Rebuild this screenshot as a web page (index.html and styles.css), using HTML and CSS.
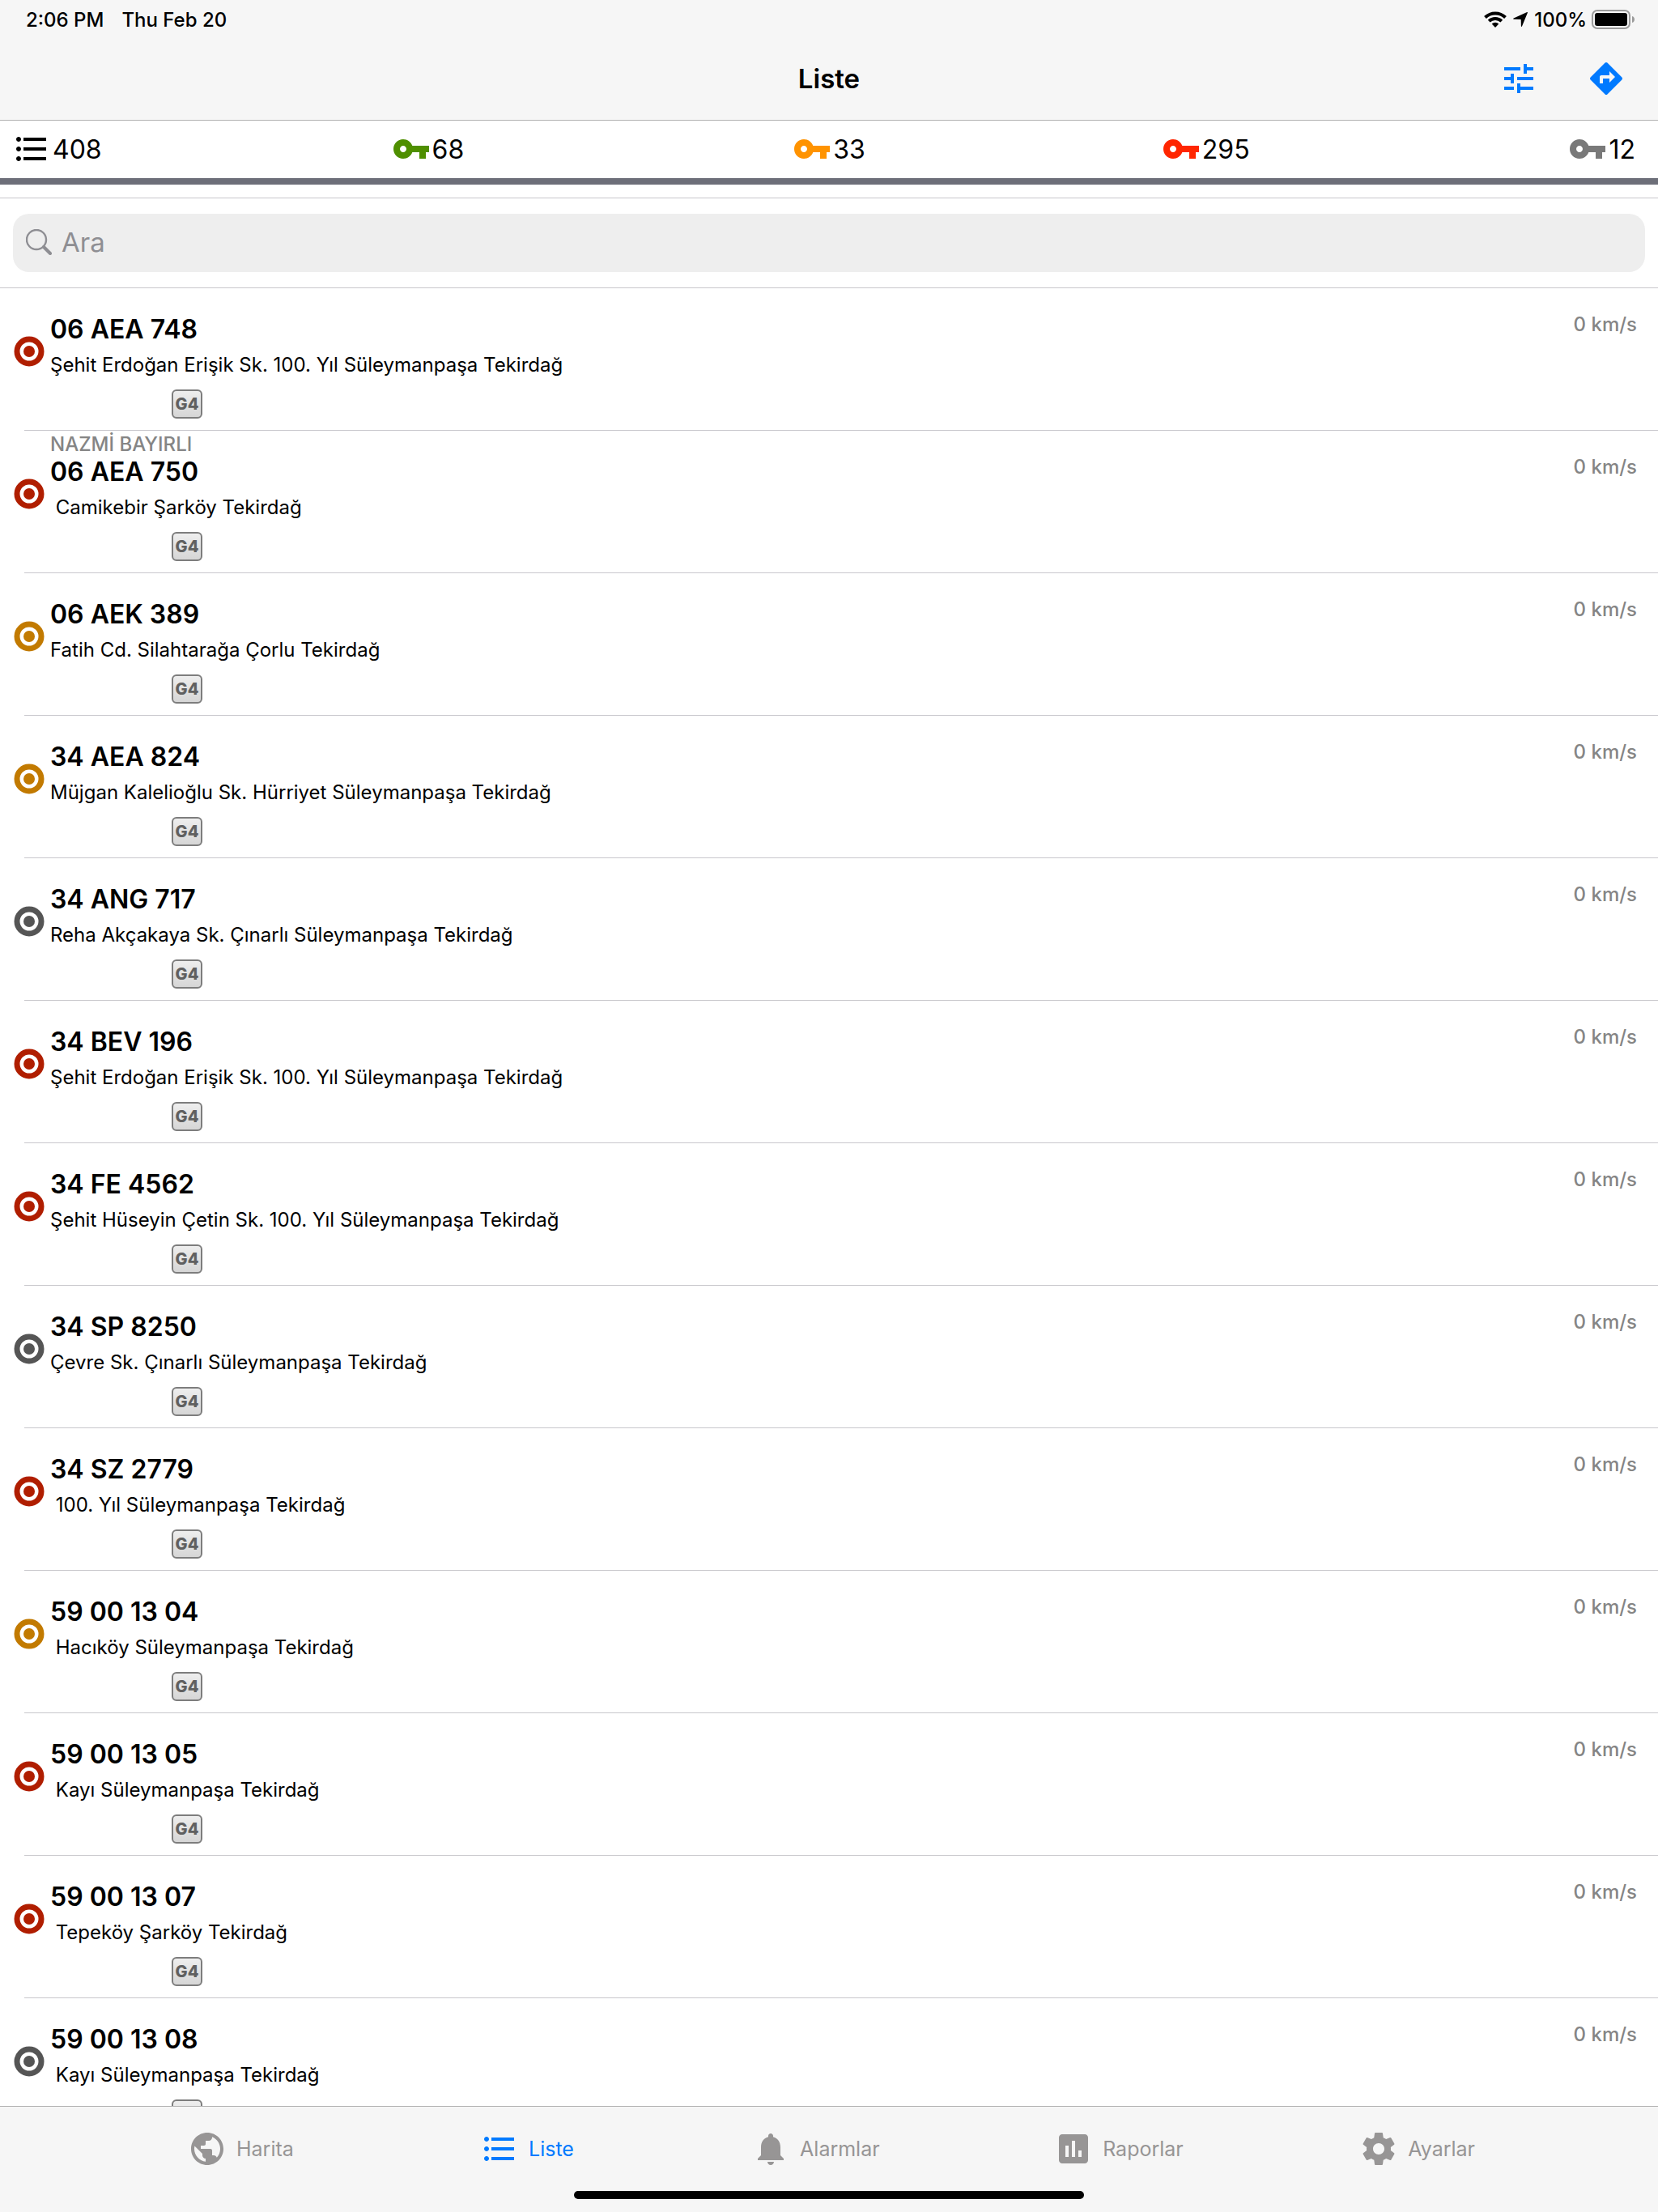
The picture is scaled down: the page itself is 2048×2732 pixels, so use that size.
FILE: index.html
```
<!DOCTYPE html>
<html lang="tr">
<head>
  <meta charset="UTF-8">
  <meta name="viewport" content="width=device-width, initial-scale=1.0">
  <title>Liste</title>
  <link rel="stylesheet" href="styles.css">
</head>
<body>
  <!-- shared icons -->
  <svg class="sprite" aria-hidden="true">
    <symbol id="icon-list" viewBox="0 0 24 24">
      <path d="M4 10.5c-.83 0-1.5.67-1.5 1.5s.67 1.5 1.5 1.5 1.5-.67 1.5-1.5-.67-1.5-1.5-1.5zm0-6c-.83 0-1.5.67-1.5 1.5S3.17 7.5 4 7.5 5.5 6.83 5.5 6 4.83 4.5 4 4.5zm0 12c-.83 0-1.5.68-1.5 1.5s.68 1.5 1.5 1.5 1.5-.68 1.5-1.5-.67-1.5-1.5-1.5zM7 19h14v-2H7v2zm0-6h14v-2H7v2zm0-8v2h14V5H7z"/>
    </symbol>
    <symbol id="icon-key" viewBox="0 0 24 24">
      <path d="M12.65 10C11.83 7.67 9.61 6 7 6c-3.31 0-6 2.69-6 6s2.69 6 6 6c2.61 0 4.83-1.67 5.65-4H17v4h4v-4h2v-4H12.65zM7 14c-1.1 0-2-.9-2-2s.9-2 2-2 2 .9 2 2-.9 2-2 2z"/>
    </symbol>
    <symbol id="icon-target" viewBox="0 0 38 38">
      <circle cx="19" cy="19" r="15" fill="#fff" stroke="currentColor" stroke-width="7"/>
      <circle cx="19" cy="19" r="7"/>
    </symbol>
  </svg>

  <header class="header">
    <div class="status-bar">
      <span>2:06 PM</span>
      <span>Thu Feb 20</span>
      <div class="status-right">
        <svg class="wifi" viewBox="0 0 28 20" aria-hidden="true">
          <path d="M1.5 7.5a18 18 0 0 1 25 0M6.2 12.1a11.4 11.4 0 0 1 15.6 0" fill="none" stroke="#000" stroke-width="4"/>
          <path d="M14 20l-4.3-4.4a6.2 6.2 0 0 1 8.6 0z"/>
        </svg>
        <svg class="location" viewBox="0 0 18 18" aria-hidden="true">
          <path d="M17.9.7L11 17.4c-.3.7-1.1.6-1.1-.1L9.700 9.100.8 8.700c-.8 0-.8-.8-.1-1.100L17.200.1c.5-.2.9.2.7.6z"/>
        </svg>
        <span>100%</span>
        <svg class="battery" viewBox="0 0 54 24" aria-hidden="true">
          <rect x="1" y="1" width="46" height="22" rx="6" fill="none" stroke="#9b9b9b" stroke-width="2"/>
          <rect x="4" y="4" width="40" height="16" rx="3"/>
          <path d="M50 8c4 1 4 7 0 8z" fill="#9b9b9b"/>
        </svg>
      </div>
    </div>
    <div class="nav-bar">
      <h1>Liste</h1>
      <div class="nav-actions">
        <button type="button" class="icon-btn" aria-label="Filtre">
          <svg class="icon" viewBox="0 0 24 24"><path d="M3 17v2h6v-2H3zM3 5v2h10V5H3zm10 16v-2h8v-2h-8v-2h-2v6h2zM7 9v2H3v2h4v2h2V9H7zm14 4v-2H11v2h10zm-6-4h2V7h4V5h-4V3h-2v6z"/></svg>
        </button>
        <button type="button" class="icon-btn" aria-label="Yol tarifi">
          <svg class="icon" viewBox="0 0 24 24"><path d="M21.71 11.29l-9-9c-.39-.39-1.02-.39-1.41 0l-9 9c-.39.39-.39 1.02 0 1.41l9 9c.39.39 1.02.39 1.41 0l9-9c.39-.38.39-1.01 0-1.41zM14 14.5V12h-4v3H8v-4c0-.55.45-1 1-1h5V7.5l3.5 3.5-3.5 3.5z"/></svg>
        </button>
      </div>
    </div>
  </header>

  <div class="counters">
    <div class="counter"><svg class="icon"><use href="#icon-list"/></svg>408</div>
    <div class="counter"><svg class="icon green"><use href="#icon-key"/></svg>68</div>
    <div class="counter"><svg class="icon orange"><use href="#icon-key"/></svg>33</div>
    <div class="counter"><svg class="icon red"><use href="#icon-key"/></svg>295</div>
    <div class="counter"><svg class="icon gray"><use href="#icon-key"/></svg>12</div>
  </div>

  <div class="search">
    <label class="search-box" for="search">
      <svg class="search-icon" viewBox="0 0 32 32" aria-hidden="true">
        <circle cx="13" cy="13" r="12" fill="none" stroke="#8e8e93" stroke-width="2.4"/>
        <path d="M22 22l8 8" stroke="#8e8e93" stroke-width="4" stroke-linecap="round"/>
      </svg>
      <input type="search" id="search" placeholder="Ara" aria-label="Ara">
    </label>
  </div>

  <ul class="vehicles" id="vehicles"></ul>

  <footer class="footer">
    <nav class="tabs">
      <a class="tab" href="#harita">
        <svg class="icon" viewBox="0 0 24 24"><path d="M12 2C6.48 2 2 6.48 2 12s4.48 10 10 10 10-4.48 10-10S17.52 2 12 2zm-1 17.93c-3.95-.49-7-3.85-7-7.93 0-.62.08-1.21.21-1.79L9 15v1c0 1.1.9 2 2 2v1.93zm6.9-2.54c-.26-.81-1-1.39-1.9-1.39h-1v-3c0-.55-.45-1-1-1H8v-2h2c.55 0 1-.45 1-1V7h2c1.1 0 2-.9 2-2v-.41c2.93 1.19 5 4.06 5 7.41 0 2.08-.8 3.97-2.1 5.39z"/></svg>
        Harita
      </a>
      <a class="tab active" href="#liste">
        <svg class="icon"><use href="#icon-list"/></svg>
        Liste
      </a>
      <a class="tab" href="#alarmlar">
        <svg class="icon" viewBox="0 0 24 24"><path d="M12 22c1.1 0 2-.9 2-2h-4c0 1.1.89 2 2 2zm6-6v-5c0-3.07-1.64-5.64-4.5-6.32V4c0-.83-.67-1.5-1.5-1.5s-1.5.67-1.5 1.5v.68C7.63 5.36 6 7.92 6 11v5l-2 2v1h16v-1l-2-2z"/></svg>
        Alarmlar
      </a>
      <a class="tab" href="#raporlar">
        <svg class="icon" viewBox="0 0 24 24"><path d="M19 3H5c-1.1 0-2 .9-2 2v14c0 1.1.9 2 2 2h14c1.1 0 2-.9 2-2V5c0-1.1-.9-2-2-2zM9 17H7v-7h2v7zm4 0h-2V7h2v10zm4 0h-2v-4h2v4z"/></svg>
        Raporlar
      </a>
      <a class="tab" href="#ayarlar">
        <svg class="icon" viewBox="0 0 24 24"><path d="M19.43 12.98c.04-.32.07-.64.07-.98s-.03-.66-.07-.98l2.11-1.65c.19-.15.24-.42.12-.64l-2-3.46c-.12-.22-.39-.3-.61-.22l-2.49 1c-.52-.4-1.08-.73-1.69-.98l-.38-2.65C14.46 2.18 14.25 2 14 2h-4c-.25 0-.46.18-.49.42l-.38 2.65c-.61.25-1.17.59-1.69.98l-2.49-1c-.23-.09-.49 0-.61.22l-2 3.46c-.13.22-.07.49.12.64l2.11 1.65c-.04.32-.07.65-.07.98s.03.66.07.98l-2.11 1.65c-.19.15-.24.42-.12.64l2 3.46c.12.22.39.3.61.22l2.49-1c.52.4 1.08.73 1.69.98l.38 2.65c.03.24.24.42.49.42h4c.25 0 .46-.18.49-.42l.38-2.65c.61-.25 1.17-.59 1.69-.98l2.49 1c.23.09.49 0 .61-.22l2-3.46c.12-.22.07-.49-.12-.64l-2.11-1.65zM12 15.5c-1.93 0-3.5-1.57-3.5-3.5s1.57-3.5 3.5-3.5 3.5 1.57 3.5 3.5-1.57 3.5-3.5 3.5z"/></svg>
        Ayarlar
      </a>
    </nav>
    <div class="home-indicator"></div>
  </footer>

  <script>
    // some addresses come without a street and keep their leading space
    const vehicles = [
      { plate: '06 AEA 748', status: 'stopped', address: 'Şehit Erdoğan Erişik Sk. 100. Yıl Süleymanpaşa Tekirdağ' },
      { plate: '06 AEA 750', status: 'stopped', address: ' Camikebir Şarköy Tekirdağ', driver: 'NAZMİ BAYIRLI' },
      { plate: '06 AEK 389', status: 'idle', address: 'Fatih Cd. Silahtarağa Çorlu Tekirdağ' },
      { plate: '34 AEA 824', status: 'idle', address: 'Müjgan Kalelioğlu Sk. Hürriyet Süleymanpaşa Tekirdağ' },
      { plate: '34 ANG 717', status: 'offline', address: 'Reha Akçakaya Sk. Çınarlı Süleymanpaşa Tekirdağ' },
      { plate: '34 BEV 196', status: 'stopped', address: 'Şehit Erdoğan Erişik Sk. 100. Yıl Süleymanpaşa Tekirdağ' },
      { plate: '34 FE 4562', status: 'stopped', address: 'Şehit Hüseyin Çetin Sk. 100. Yıl Süleymanpaşa Tekirdağ' },
      { plate: '34 SP 8250', status: 'offline', address: 'Çevre Sk. Çınarlı Süleymanpaşa Tekirdağ' },
      { plate: '34 SZ 2779', status: 'stopped', address: ' 100. Yıl Süleymanpaşa Tekirdağ' },
      { plate: '59 00 13 04', status: 'idle', address: ' Hacıköy Süleymanpaşa Tekirdağ' },
      { plate: '59 00 13 05', status: 'stopped', address: ' Kayı Süleymanpaşa Tekirdağ' },
      { plate: '59 00 13 07', status: 'stopped', address: ' Tepeköy Şarköy Tekirdağ' },
      { plate: '59 00 13 08', status: 'offline', address: ' Kayı Süleymanpaşa Tekirdağ' }
    ];

    const list = document.getElementById('vehicles');
    vehicles.forEach(v => {
      const li = document.createElement('li');
      li.className = 'vehicle';
      li.innerHTML = `<svg class="target ${v.status}"><use href="#icon-target"/></svg>
                      <div class="info">
                        <div class="driver">${v.driver || ''}</div>
                        <div class="plate">${v.plate}</div>
                        <div class="address">${v.address}</div>
                        <span class="badge">G4</span>
                      </div>
                      <div class="speed">0 km/s</div>`;
      list.appendChild(li);
    });
  </script>
</body>
</html>
```
FILE: styles.css
```
* {
  box-sizing: border-box;
}
body {
  margin: 0;
  height: 100vh;
  display: flex;
  flex-direction: column;
  overflow: hidden;
  background: #fff;
  color: #000;
  font-family: Inter, "Liberation Sans", sans-serif;
}
.sprite {
  display: none;
}
.icon {
  width: 48px;
  height: 48px;
  flex-shrink: 0;
  fill: currentColor;
}

/* Header */
.header {
  flex-shrink: 0;
  background: #f6f6f6;
  border-bottom: 1px solid #b2b2b2;
}
.status-bar {
  display: flex;
  align-items: center;
  gap: 22px;
  height: 48px;
  padding: 0 28px 0 32px;
  font-size: 24px;
  font-weight: 500;
}
.status-right {
  display: flex;
  align-items: center;
  gap: 6px;
  margin-left: auto;
}
.wifi {
  width: 28px;
  height: 20px;
}
.location {
  width: 18px;
  height: 18px;
  margin: 0 2px;
}
.battery {
  width: 54px;
  height: 24px;
}
.nav-bar {
  display: grid;
  grid-template-columns: 1fr auto 1fr;
  align-items: center;
  height: 100px;
  padding: 0 40px 2px;
}
.nav-bar h1 {
  grid-column: 2;
  margin: 0;
  font-size: 33px;
  font-weight: 600;
}
.nav-actions {
  display: flex;
  justify-content: flex-end;
  gap: 60px;
}
.icon-btn {
  display: flex;
  padding: 0;
  border: none;
  background: none;
  color: #007aff;
  cursor: pointer;
}

/* Counters */
.counters {
  flex-shrink: 0;
  display: grid;
  grid-template-columns: 468fr 495fr 455fr 502fr auto;
  align-items: center;
  height: 79px;
  padding: 0 28px 1px 15px;
  border-bottom: 8px solid #6d6f79;
}
.counter {
  display: flex;
  align-items: center;
  gap: 2px;
  font-size: 32px;
}
.green {
  color: #4f8f00;
}
.orange {
  color: #ff9300;
}
.red {
  color: #ff2600;
}
.gray {
  color: #797979;
}

/* Search */
.search {
  flex-shrink: 0;
  margin-top: 16px;
  padding: 19px 16px;
  border-top: 1px solid #c8c7cc;
  border-bottom: 1px solid #c8c7cc;
}
.search-box {
  display: flex;
  align-items: center;
  gap: 12px;
  height: 72px;
  padding: 0 16px 2px;
  border-radius: 20px;
  background: #eee;
}
.search-icon {
  width: 32px;
  height: 32px;
}
.search-box input {
  flex: 1;
  padding: 0;
  border: none;
  outline: none;
  background: none;
  font-family: inherit;
  font-size: 33px;
}
.search-box input::placeholder {
  color: #8e8e93;
}

/* Vehicle list */
.vehicles {
  flex: 1;
  min-height: 0;
  margin: 0;
  padding: 0 0 0 30px;
  overflow: hidden;
  list-style: none;
}
.vehicle {
  display: flex;
  height: 176px;
  padding-right: 26px;
  border-bottom: 1px solid #c8c7cc;
}
.target {
  width: 38px;
  height: 38px;
  margin: 59px 7px 0 -13px;
  fill: currentColor;
}
.stopped {
  color: #b01e00;
}
.idle {
  color: #c27a00;
}
.offline {
  color: #555;
}
.info {
  flex: 1;
}
.driver {
  height: 33px;
  line-height: 34px;
  font-size: 24px;
  font-weight: 500;
  color: #858585;
}
.plate {
  line-height: 36px;
  font-size: 32px;
  font-weight: 600;
}
.address {
  margin-top: 10px;
  line-height: 32px;
  font-size: 24px;
  white-space: pre;
}
.badge {
  display: block;
  width: 38px;
  margin: 14px 0 0 150px;
  border: 2px solid #7d7d7d;
  border-radius: 6px;
  background: linear-gradient(#eee, #d6d6d6);
  color: #606060;
  font-size: 20px;
  font-weight: 800;
  line-height: 32px;
  text-align: center;
}
.speed {
  margin-top: 29px;
  line-height: 32px;
  font-size: 24px;
  font-weight: 500;
  color: #858585;
}

/* Tab bar */
.footer {
  flex-shrink: 0;
  padding-bottom: 16px;
  border-top: 1px solid #b2b2b2;
  background: #f6f6f6;
}
.tabs {
  display: grid;
  grid-template-columns: 361fr 335fr 374fr 377fr auto;
  align-items: center;
  height: 104px;
  padding: 0 226px 0 232px;
}
.tab {
  display: flex;
  align-items: center;
  gap: 12px;
  font-size: 25px;
  color: #979595;
  text-decoration: none;
}
.tab.active {
  color: #007aff;
}
.home-indicator {
  width: 630px;
  height: 10px;
  margin: 0 auto;
  border-radius: 5px;
  background: #000;
}
```
